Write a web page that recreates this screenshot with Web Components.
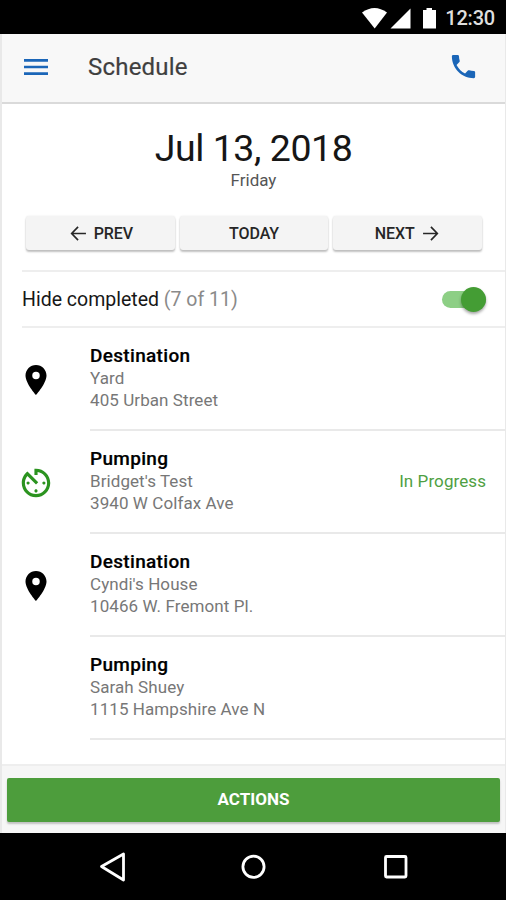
<!DOCTYPE html>
<html lang="en">
<head>
<meta charset="utf-8">
<title>Schedule</title>
<style>
  body { margin: 0; background: #000; font-family: Roboto, "Open Sans", sans-serif; }
</style>
</head>
<body>
<schedule-app></schedule-app>
<script>
const define = (name, html, setup) => {
  const template = document.createElement('template');
  template.innerHTML = html;
  customElements.define(name, class extends HTMLElement {
    constructor() {
      super();
      this.attachShadow({ mode: 'open' }).append(template.content.cloneNode(true));
    }
    connectedCallback() { if (setup) setup(this, this.shadowRoot); }
  });
};

const ICONS = {
  menu: '<path d="M3 6h18v2H3zm0 5h18v2H3zm0 5h18v2H3z"/>',
  phone: '<path d="M6.62 10.79c1.44 2.83 3.76 5.14 6.59 6.59l2.2-2.2c.27-.27.67-.36 1.02-.24 1.12.37 2.33.57 3.57.57.55 0 1 .45 1 1V20c0 .55-.45 1-1 1-9.39 0-17-7.61-17-17 0-.55.45-1 1-1h3.5c.55 0 1 .45 1 1 0 1.25.2 2.45.57 3.57.11.35.03.74-.25 1.02z"/>',
  pin: '<path d="M12 2C8.13 2 5 5.13 5 9c0 5.25 7 13 7 13s7-7.75 7-13c0-3.87-3.13-7-7-7zm0 9.5a2.5 2.5 0 1 1 0-5 2.5 2.5 0 0 1 0 5z"/>',
  timer: '<path d="M11 17c0 .55.45 1 1 1s1-.45 1-1-.45-1-1-1-1 .45-1 1zm0-14v4h2V5.08c3.39.49 6 3.39 6 6.92 0 3.87-3.13 7-7 7s-7-3.13-7-7c0-1.68.59-3.22 1.58-4.42L12 13l1.41-1.41-6.8-6.8v.02C4.42 6.45 3 9.05 3 12c0 4.97 4.02 9 9 9 4.97 0 9-4.03 9-9s-4.03-9-9-9h-1zm7 9c0-.55-.45-1-1-1s-1 .45-1 1 .45 1 1 1 1-.45 1-1zM6 12c0 .55.45 1 1 1s1-.45 1-1-.45-1-1-1-1 .45-1 1z"/>',
  back: '<path d="M11.5 4.500 4.200 12l7.300 7.500M4.500 12h16" fill="none" stroke="currentColor" stroke-width="1.900"/>',
  forward: '<path d="M12.5 4.500l7.300 7.500-7.300 7.500M19.500 12h-16" fill="none" stroke="currentColor" stroke-width="1.900"/>'
};

define('ui-icon', `
  <style>
    :host { display: block; flex: none; width: var(--size, 24px); height: var(--size, 24px); }
    svg { display: block; width: 100%; height: 100%; fill: currentColor; }
  </style>
  <svg viewBox="0 0 24 24"></svg>`,
  (el, root) => { root.querySelector('svg').innerHTML = ICONS[el.getAttribute('name')] || ''; });

define('status-bar', `
  <style>
    :host { display: flex; justify-content: flex-end; align-items: center; box-sizing: border-box;
      height: 34px; padding: 1px 11px 0 0; background: #000; color: #dedede; }
    svg { display: block; fill: #fff; }
    .time { margin-left: 8px; font-size: 20px; line-height: 34px; font-weight: 500; letter-spacing: -.2px; }
  </style>
  <svg width="75" height="22" viewBox="0 0 75 22">
    <path d="M0 5.5Q12.5-3.5 25 5.5L12.7 21.5z"/>
    <path d="M48.5 1.500V21.500H28.500z"/>
    <path d="M61 3h3.500V1h5.500v2h4v18.500H61z"/>
  </svg>
  <span class="time"><slot></slot></span>`);

define('app-bar', `
  <style>
    :host { display: flex; align-items: center; box-sizing: border-box; height: 70px; padding: 0 26px 3px 18px;
      background: #f8f8f8; border-bottom: 2px solid #dadada; color: #1b66b8; --size: 32px; }
    h1 { flex: 1; margin: 1px 0 0 36px; font-size: 24px; line-height: 32px; font-weight: 400; color: #3f3f3f; letter-spacing: .2px; -webkit-text-stroke: .2px #3f3f3f; }
    .phone { --size: 31px; }
  </style>
  <ui-icon class="menu" name="menu"></ui-icon>
  <h1><slot></slot></h1>
  <ui-icon class="phone" name="phone"></ui-icon>`);

define('date-heading', `
  <style>
    :host { display: block; text-align: center; padding-top: 22px; height: 90px; }
    .date { font-size: 37.5px; line-height: 44px; color: #161616; letter-spacing: -.45px; }
    .day { font-size: 17px; line-height: 21px; color: #555; }
  </style>
  <div class="date"><slot></slot></div>
  <div class="day"><slot name="day"></slot></div>`);

define('nav-button', `
  <style>
    :host { flex: 1; display: flex; align-items: center; justify-content: center; gap: 5px; height: 34px;
      border-radius: 3px; background: #f4f4f4; color: #262626; font-size: 16px; font-weight: 500; letter-spacing: -.1px;
      box-shadow: 0 2px 2px rgba(0,0,0,.24), 0 0 2px rgba(0,0,0,.1); --size: 21px; }
  </style>
  <slot></slot>`);

define('toggle-switch', `
  <style>
    :host { display: flex; align-items: center; justify-content: flex-end; box-sizing: border-box; width: 44px; height: 17px;
      border-radius: 9px; background: #8dcf85; }
    span { flex: none; width: 25px; height: 25px; border-radius: 50%; background: #449d34; box-shadow: 0 2px 3px rgba(0,0,0,.35); }
  </style>
  <span></span>`);

define('filter-row', `
  <style>
    :host { display: flex; align-items: center; justify-content: space-between; box-sizing: border-box; height: 58px;
      margin-left: 20px; padding: 1px 19px 0 0; border: solid #eee; border-width: 2px 0; font-size: 19.5px; color: #171717; }
    .count { color: #8a8a8a; }
  </style>
  <div><slot></slot> <span class="count"><slot name="count"></slot></span></div>
  <toggle-switch></toggle-switch>`);

define('job-item', `
  <style>
    :host { display: flex; height: 103px; box-sizing: border-box; color: #000; }
    .icon { width: 68px; flex: none; margin-left: 20px; display: flex; align-items: center; }
    .icon div { width: 28px; display: flex; justify-content: center; }
    .body { flex: 1; display: flex; box-sizing: border-box; justify-content: space-between; align-items: center;
      padding-right: 19px; border-bottom: 2px solid #e9e9e9; }
    h2 { margin: 0; font-size: 19px; line-height: 22px; font-weight: 500; letter-spacing: .32px; -webkit-text-stroke: .2px #000; }
    .line { font-size: 17px; line-height: 23px; color: #777; letter-spacing: .08px; white-space: nowrap; }
    .line:first-of-type { line-height: 22px; }
    .status { font-size: 17px; color: #4f9f43; letter-spacing: .08px; padding-bottom: 1px; }
    .text { padding-bottom: 1px; }
  </style>
  <div class="icon"><div></div></div>
  <div class="body">
    <div class="text">
      <h2><slot name="kind"></slot></h2>
      <div class="line"><slot name="place"></slot></div>
      <div class="line"><slot name="address"></slot></div>
    </div>
    <div class="status"><slot name="status"></slot></div>
  </div>`,
  (el, root) => {
    const name = el.getAttribute('icon');
    if (!name) return;
    const icon = document.createElement('ui-icon');
    icon.setAttribute('name', name);
    const size = name === 'timer' ? 38 : 36;
    icon.style.cssText = `width:${size}px;height:${size}px;color:${name === 'timer' ? '#2b931f' : '#000'}`;
    root.querySelector('.icon div').append(icon);
  });

define('action-footer', `
  <style>
    :host { display: block; box-sizing: border-box; height: 69px; padding: 12px 5px 0; background: #f6f6f6; border-top: 2px solid #eee; }
    .button { height: 44px; border-radius: 2px; background: #4d9d3c; color: #fff; text-align: center;
      font-size: 17px; line-height: 43px; font-weight: 700; box-shadow: 0 2px 2px rgba(0,0,0,.22); }
  </style>
  <div class="button"><slot></slot></div>`);

define('system-nav', `
  <style>
    :host { display: flex; justify-content: center; align-items: center; height: 67px; background: #000; }
    svg { display: block; fill: none; stroke: #fff; stroke-width: 2.8; stroke-linejoin: round; }
  </style>
  <svg width="506" height="67" viewBox="0 0 506 67">
    <path d="M101.500 33.500 123.500 21V47z"/>
    <circle cx="253.500" cy="33.800" r="10.600"/>
    <rect x="385.500" y="23.500" width="20.500" height="20.500" rx="1"/>
  </svg>`);

define('schedule-app', `
  <style>
    :host { display: flex; flex-direction: column; width: 506px; height: 900px; overflow: hidden; }
    .screen { display: flex; flex-direction: column; flex: 1; min-height: 0; box-sizing: border-box;
      border: solid #e9e9e9; border-width: 0 1px 0 2px; background: #fff; }
    .nav { display: flex; gap: 5px; padding: 0 23px 20px 24px; }
    .list { flex: 1; min-height: 0; overflow: hidden; }
  </style>
  <status-bar>12:30</status-bar>
  <div class="screen">
    <app-bar>Schedule</app-bar>
    <date-heading>Jul 13, 2018<span slot="day">Friday</span></date-heading>
    <div class="nav">
      <nav-button><ui-icon name="back"></ui-icon><span>PREV</span></nav-button>
      <nav-button><span>TODAY</span></nav-button>
      <nav-button><span>NEXT</span><ui-icon name="forward"></ui-icon></nav-button>
    </div>
    <filter-row>Hide completed<span slot="count">(7 of 11)</span></filter-row>
    <div class="list">
      <job-item icon="pin"><span slot="kind">Destination</span><span slot="place">Yard</span><span slot="address">405 Urban Street</span></job-item>
      <job-item icon="timer"><span slot="kind">Pumping</span><span slot="place">Bridget's Test</span><span slot="address">3940 W Colfax Ave</span><span slot="status">In Progress</span></job-item>
      <job-item icon="pin"><span slot="kind">Destination</span><span slot="place">Cyndi's House</span><span slot="address">10466 W. Fremont Pl.</span></job-item>
      <job-item><span slot="kind">Pumping</span><span slot="place">Sarah Shuey</span><span slot="address">1115 Hampshire Ave N</span></job-item>
    </div>
    <action-footer>ACTIONS</action-footer>
  </div>
  <system-nav></system-nav>`);
</script>
</body>
</html>
